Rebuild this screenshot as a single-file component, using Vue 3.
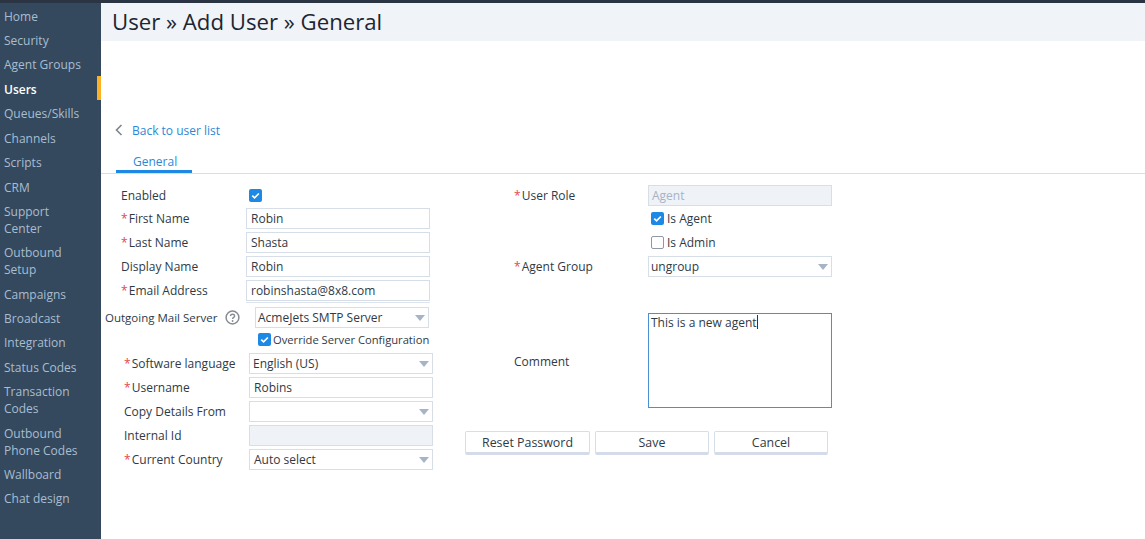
<script setup>
const navItems = [
  { label: "Home" },
  { label: "Security" },
  { label: "Agent Groups" },
  { label: "Users", active: true },
  { label: "Queues/Skills" },
  { label: "Channels" },
  { label: "Scripts" },
  { label: "CRM" },
  { label: "Support Center", wrap: true },
  { label: "Outbound Setup", wrap: true },
  { label: "Campaigns" },
  { label: "Broadcast" },
  { label: "Integration" },
  { label: "Status Codes" },
  { label: "Transaction Codes", wrap: true },
  { label: "Outbound Phone Codes", wrap: true },
  { label: "Wallboard" },
  { label: "Chat design" },
];
</script>

<template>
  <div class="page">
    <aside class="sidebar">
      <a
        v-for="item in navItems"
        :key="item.label"
        class="nav-item"
        :class="{ active: item.active, wrap: item.wrap }"
        >{{ item.label }}</a
      >
    </aside>

    <main class="main">
      <h1 class="title">User » Add User » General</h1>

      <div class="back">
        <svg width="8" height="12" viewBox="0 0 8 12">
          <path d="M6.5 1 L1.5 6 L6.5 11" fill="none" stroke="#7d858d" stroke-width="1.6" />
        </svg>
        <a>Back to user list</a>
      </div>

      <div class="tabs"><span class="tab">General</span></div>

      <div class="form">
        <div class="col-left">
          <div class="row enabled">
            <label class="label">Enabled</label>
            <span class="check on">
              <svg width="13" height="13" viewBox="0 0 14 14"><path d="M3.5 7.2 L6 9.6 L10.6 4.8" fill="none" stroke="#fff" stroke-width="1.8" /></svg>
            </span>
          </div>
          <div class="row">
            <label class="label"><i>*</i> First Name</label>
            <div class="field">Robin</div>
          </div>
          <div class="row">
            <label class="label"><i>*</i> Last Name</label>
            <div class="field">Shasta</div>
          </div>
          <div class="row">
            <label class="label">Display Name</label>
            <div class="field">Robin</div>
          </div>
          <div class="row">
            <label class="label"><i>*</i> Email Address</label>
            <div class="field">robinshasta@8x8.com</div>
          </div>
          <div class="clip-line"></div>

          <div class="row mail">
            <label class="label-mail">Outgoing Mail Server</label>
            <svg class="help" width="15" height="15" viewBox="0 0 15 15">
              <circle cx="7.5" cy="7.5" r="6.4" fill="none" stroke="#858c93" stroke-width="1.5" />
              <path d="M5.5 6 C5.5 3.6 9.6 3.6 9.6 5.9 C9.6 7.3 7.6 7.4 7.6 9" fill="none" stroke="#858c93" stroke-width="1.4" />
              <circle cx="7.6" cy="11" r="0.9" fill="#858c93" />
            </svg>
            <div class="field select mail-select">AcmeJets SMTP Server<span class="caret"></span></div>
          </div>
          <div class="override">
            <span class="check on small">
              <svg width="13" height="13" viewBox="0 0 14 14"><path d="M3.5 7.2 L6 9.6 L10.6 4.8" fill="none" stroke="#fff" stroke-width="1.8" /></svg>
            </span>
            <span>Override Server Configuration</span>
          </div>

          <div class="lower">
            <div class="row">
              <label class="label"><i>*</i> Software language</label>
              <div class="field select tight">English (US)<span class="caret"></span></div>
            </div>
            <div class="row">
              <label class="label"><i>*</i> Username</label>
              <div class="field">Robins</div>
            </div>
            <div class="row">
              <label class="label">Copy Details From</label>
              <div class="field select"><span class="caret"></span></div>
            </div>
            <div class="row">
              <label class="label">Internal Id</label>
              <div class="field disabled"></div>
            </div>
            <div class="row">
              <label class="label"><i>*</i> Current Country</label>
              <div class="field select">Auto select<span class="caret"></span></div>
            </div>
          </div>
        </div>

        <div class="col-right">
          <div class="r-row">
            <label class="r-label"><i>*</i> User Role</label>
            <div class="field disabled muted">Agent</div>
          </div>
          <div class="r-row flag">
            <span class="check on small">
              <svg width="13" height="13" viewBox="0 0 14 14"><path d="M3.5 7.2 L6 9.6 L10.6 4.8" fill="none" stroke="#fff" stroke-width="1.8" /></svg>
            </span>
            <span>Is Agent</span>
          </div>
          <div class="r-row flag">
            <span class="check small"></span>
            <span>Is Admin</span>
          </div>
          <div class="r-row group">
            <label class="r-label"><i>*</i> Agent Group</label>
            <div class="field select">ungroup<span class="caret"></span></div>
          </div>
          <div class="r-row comment">
            <label class="r-label">Comment</label>
            <div class="textarea">This is a new agent<span class="cursor"></span></div>
          </div>
          <div class="buttons">
            <button class="btn reset">Reset Password</button>
            <button class="btn save">Save</button>
            <button class="btn cancel">Cancel</button>
          </div>
        </div>
      </div>
    </main>
  </div>
</template>

<style>
html,
body {
  margin: 0;
  background: #fff;
}
</style>

<style scoped>
.page {
  display: flex;
  width: 1145px;
  height: 539px;
  overflow: hidden;
  box-sizing: border-box;
  border-top: 3px solid #2a3442;
  font-family: "Open Sans", "Noto Sans", sans-serif;
  font-size: 12px;
  color: #2f3a46;
}

.sidebar {
  width: 101px;
  flex-shrink: 0;
  background: #34495e;
  box-sizing: border-box;
}

.nav-item {
  display: block;
  box-sizing: border-box;
  padding: 4.5px 4px 0 4px;
  height: 24.45px;
  line-height: 17px;
  color: #a9bdd0;
  white-space: nowrap;
  position: relative;
}

.nav-item.wrap {
  height: 41.3px;
  padding-right: 20px;
  white-space: normal;
}

.nav-item.active {
  color: #fff;
  font-weight: 600;
}

.nav-item.active::after {
  content: "";
  position: absolute;
  right: 0;
  top: 0;
  width: 4px;
  height: 24px;
  background: #fbb124;
}

.main {
  flex: 1;
  min-width: 0;
}

.title {
  margin: 0;
  height: 38px;
  line-height: 38px;
  padding-left: 11px;
  background: #f0f3f8;
  font-size: 22.2px;
  font-weight: 400;
  color: #1d2630;
}

.back {
  display: flex;
  align-items: center;
  gap: 9px;
  margin: 80px 0 0 14px;
  height: 18px;
  color: #2b88d8;
}

.tabs {
  margin-top: 13px;
  height: 21px;
  padding-left: 15px;
  border-bottom: 1px solid #d6dee8;
}

.tab {
  display: block;
  width: 76px;
  height: 21px;
  box-sizing: border-box;
  padding: 2px 0 0 17px;
  line-height: 15px;
  color: #2b88d8;
  border-bottom: 3px solid #1e88e5;
}

.form {
  display: flex;
  padding-top: 11px;
}

.col-left {
  width: 364px;
  flex-shrink: 0;
  margin-left: 4px;
}

.row {
  display: flex;
  align-items: center;
  height: 24px;
}

.label {
  width: 141px;
  flex-shrink: 0;
  padding-left: 16px;
  box-sizing: border-box;
}

.label i,
.r-label i {
  font-style: normal;
  color: #e4494d;
  margin-right: -2px;
}

.field {
  position: relative;
  width: 184px;
  height: 21px;
  line-height: 19px;
  box-sizing: border-box;
  border: 1px solid #d6dee8;
  padding-left: 4px;
  background: #fff;
  flex-shrink: 0;
  white-space: nowrap;
}

.enabled {
  height: 21px;
}

.enabled .check {
  margin-left: 3px;
}

.check {
  display: inline-flex;
  width: 13px;
  height: 13px;
  box-sizing: border-box;
  border-radius: 2px;
  flex-shrink: 0;
}

.check.on {
  background: #1e88e5;
}

.check.small:not(.on) {
  border: 1px solid #8f98a3;
  background: #fff;
}

.clip-line {
  width: 184px;
  height: 1px;
  margin-left: 141px;
  background: #dfe5ee;
}

.mail {
  margin-top: 4px;
  height: 21px;
}

.label-mail {
  width: 120px;
  flex-shrink: 0;
  font-size: 11.5px;
  white-space: nowrap;
}

.help {
  margin: 0 15px 0 0;
  flex-shrink: 0;
}

.mail-select {
  width: 174px;
  padding-left: 2px;
}

.override {
  display: flex;
  align-items: center;
  gap: 2px;
  margin: 2px 0 0 153px;
  height: 18px;
  white-space: nowrap;
  font-size: 11.2px;
}

.lower {
  margin-top: 3px;
}

.lower .label {
  padding-left: 19px;
  width: 144px;
  white-space: nowrap;
}

.tight {
  padding-left: 3px;
}

.select .caret {
  position: absolute;
  right: 3px;
  top: 7px;
  width: 0;
  height: 0;
  border-left: 5px solid transparent;
  border-right: 5px solid transparent;
  border-top: 6px solid #a7b4c6;
}

.disabled {
  background: #eff2f7;
}

.muted {
  color: #a6b3c6;
  padding-left: 3px;
}

.col-right {
  margin-left: 45px;
  width: 320px;
}

.r-row {
  display: flex;
  align-items: center;
  height: 21px;
}

.r-label {
  width: 134px;
  flex-shrink: 0;
}

.flag {
  padding-left: 137px;
  gap: 3px;
  height: 24px;
}

.group {
  margin-top: 2px;
}

.group .field {
  padding-left: 2px;
}

.comment {
  margin-top: 36px;
  height: 95px;
}

.comment .r-label {
  padding-top: 2px;
}

.textarea {
  width: 184px;
  height: 95px;
  box-sizing: border-box;
  border: 1px solid #4a90d0;
  padding: 1px 2px;
  line-height: 15px;
}

.cursor {
  display: inline-block;
  width: 1px;
  height: 14px;
  vertical-align: -2px;
  background: #333;
}

.buttons {
  display: flex;
  gap: 5px;
  margin: 23px 0 0 -49px;
}

.btn {
  height: 24px;
  box-sizing: border-box;
  background: #fff;
  border: 1px solid #d6dee8;
  border-bottom: 3px solid #d3dce8;
  border-radius: 2px;
  padding: 0;
  font: inherit;
  font-size: 12.4px;
  color: #2f3a46;
}

.reset {
  width: 125px;
}

.save {
  width: 114px;
}

.cancel {
  width: 114px;
}
</style>
